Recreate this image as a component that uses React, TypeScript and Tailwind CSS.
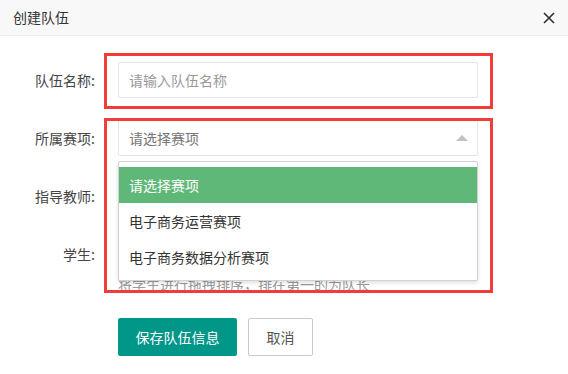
import React from 'react';

const font = { fontFamily: '"Noto Sans CJK SC", "Noto Sans", sans-serif' };

const options = ['请选择赛项', '电子商务运营赛项', '电子商务数据分析赛项'];

export default function App() {
  return (
    <div className="relative w-[568px] h-[374px] overflow-hidden bg-white text-[14px]" style={font}>
      {/* Header */}
      <div className="flex h-[36px] items-center justify-between border-b border-[#eeeeee] bg-[#f8f8f8] pl-[13px] pr-[13px]">
        <span className="text-[14px] text-[#333]">创建队伍</span>
        <svg width="12" height="12" viewBox="0 0 12 12" className="mt-[1px]">
          <path d="M1 1L11 11M11 1L1 11" stroke="#2e2e3a" strokeWidth="1.6" />
        </svg>
      </div>

      {/* Form */}
      <div className="flex flex-col gap-[22px] pt-[26px]">
        <div className="flex items-center">
          <label className="w-[118px] pr-[23px] text-right text-[#444]">队伍名称:</label>
          <div className="flex h-[36px] w-[360px] items-center rounded-[2px] border border-[#e6e6e6] pl-[10px] text-[#999]">
            请输入队伍名称
          </div>
        </div>

        <div className="flex items-center">
          <label className="w-[118px] pr-[23px] text-right text-[#444]">所属赛项:</label>
          <div className="relative w-[360px]">
            <div className="flex h-[36px] items-center justify-between rounded-[2px] border border-[#e6e6e6] pl-[10px] pr-[9px] text-[#757575]">
              <span>请选择赛项</span>
              <svg width="12" height="6" viewBox="0 0 12 6">
                <path d="M0 6L6 0L12 6Z" fill="#c2c2c2" />
              </svg>
            </div>
            <div className="absolute left-0 top-full z-10 mt-[5px] w-[360px] rounded-[2px] border border-[#d2d2d2] bg-white py-[5px] shadow-[0_2px_4px_rgba(0,0,0,0.12)]">
              {options.map((o, i) => (
                <div
                  key={o}
                  className={
                    i === 0
                      ? 'flex h-[36px] items-center bg-[#5fb878] pl-[10px] text-white'
                      : 'flex h-[36px] items-center pl-[10px] text-[#333]'
                  }
                >
                  {o}
                </div>
              ))}
            </div>
          </div>
        </div>

        <div className="flex items-center">
          <label className="w-[118px] pr-[23px] text-right text-[#444]">指导教师:</label>
          <div className="h-[36px] w-[360px] rounded-[2px] border border-[#e6e6e6]" />
        </div>

        <div className="flex items-start">
          <label className="flex h-[36px] w-[118px] items-center justify-end pr-[23px] text-[#444]">学生:</label>
          <div className="w-[360px]">
            <div className="h-[36px]" />
            <div className="mt-[2px] leading-[20px] text-[#999]">将学生进行拖拽排序，排在第一的为队长</div>
          </div>
        </div>
      </div>

      {/* Buttons */}
      <div className="mt-[24px] flex gap-[11px] pl-[118px]">
        <button className="h-[38px] w-[119px] rounded-[2px] bg-[#009688] text-[14px] text-white">保存队伍信息</button>
        <button className="h-[38px] w-[65px] rounded-[2px] border border-[#c9c9c9] bg-white text-[14px] text-[#555]">取消</button>
      </div>

      {/* Annotation boxes */}
      <div className="pointer-events-none absolute left-[104px] top-[53px] h-[56px] w-[389px] border-[3px] border-[#f23b3b]" />
      <div className="pointer-events-none absolute left-[104px] top-[118px] h-[175px] w-[389px] border-[3px] border-[#f23b3b]" />
    </div>
  );
}
